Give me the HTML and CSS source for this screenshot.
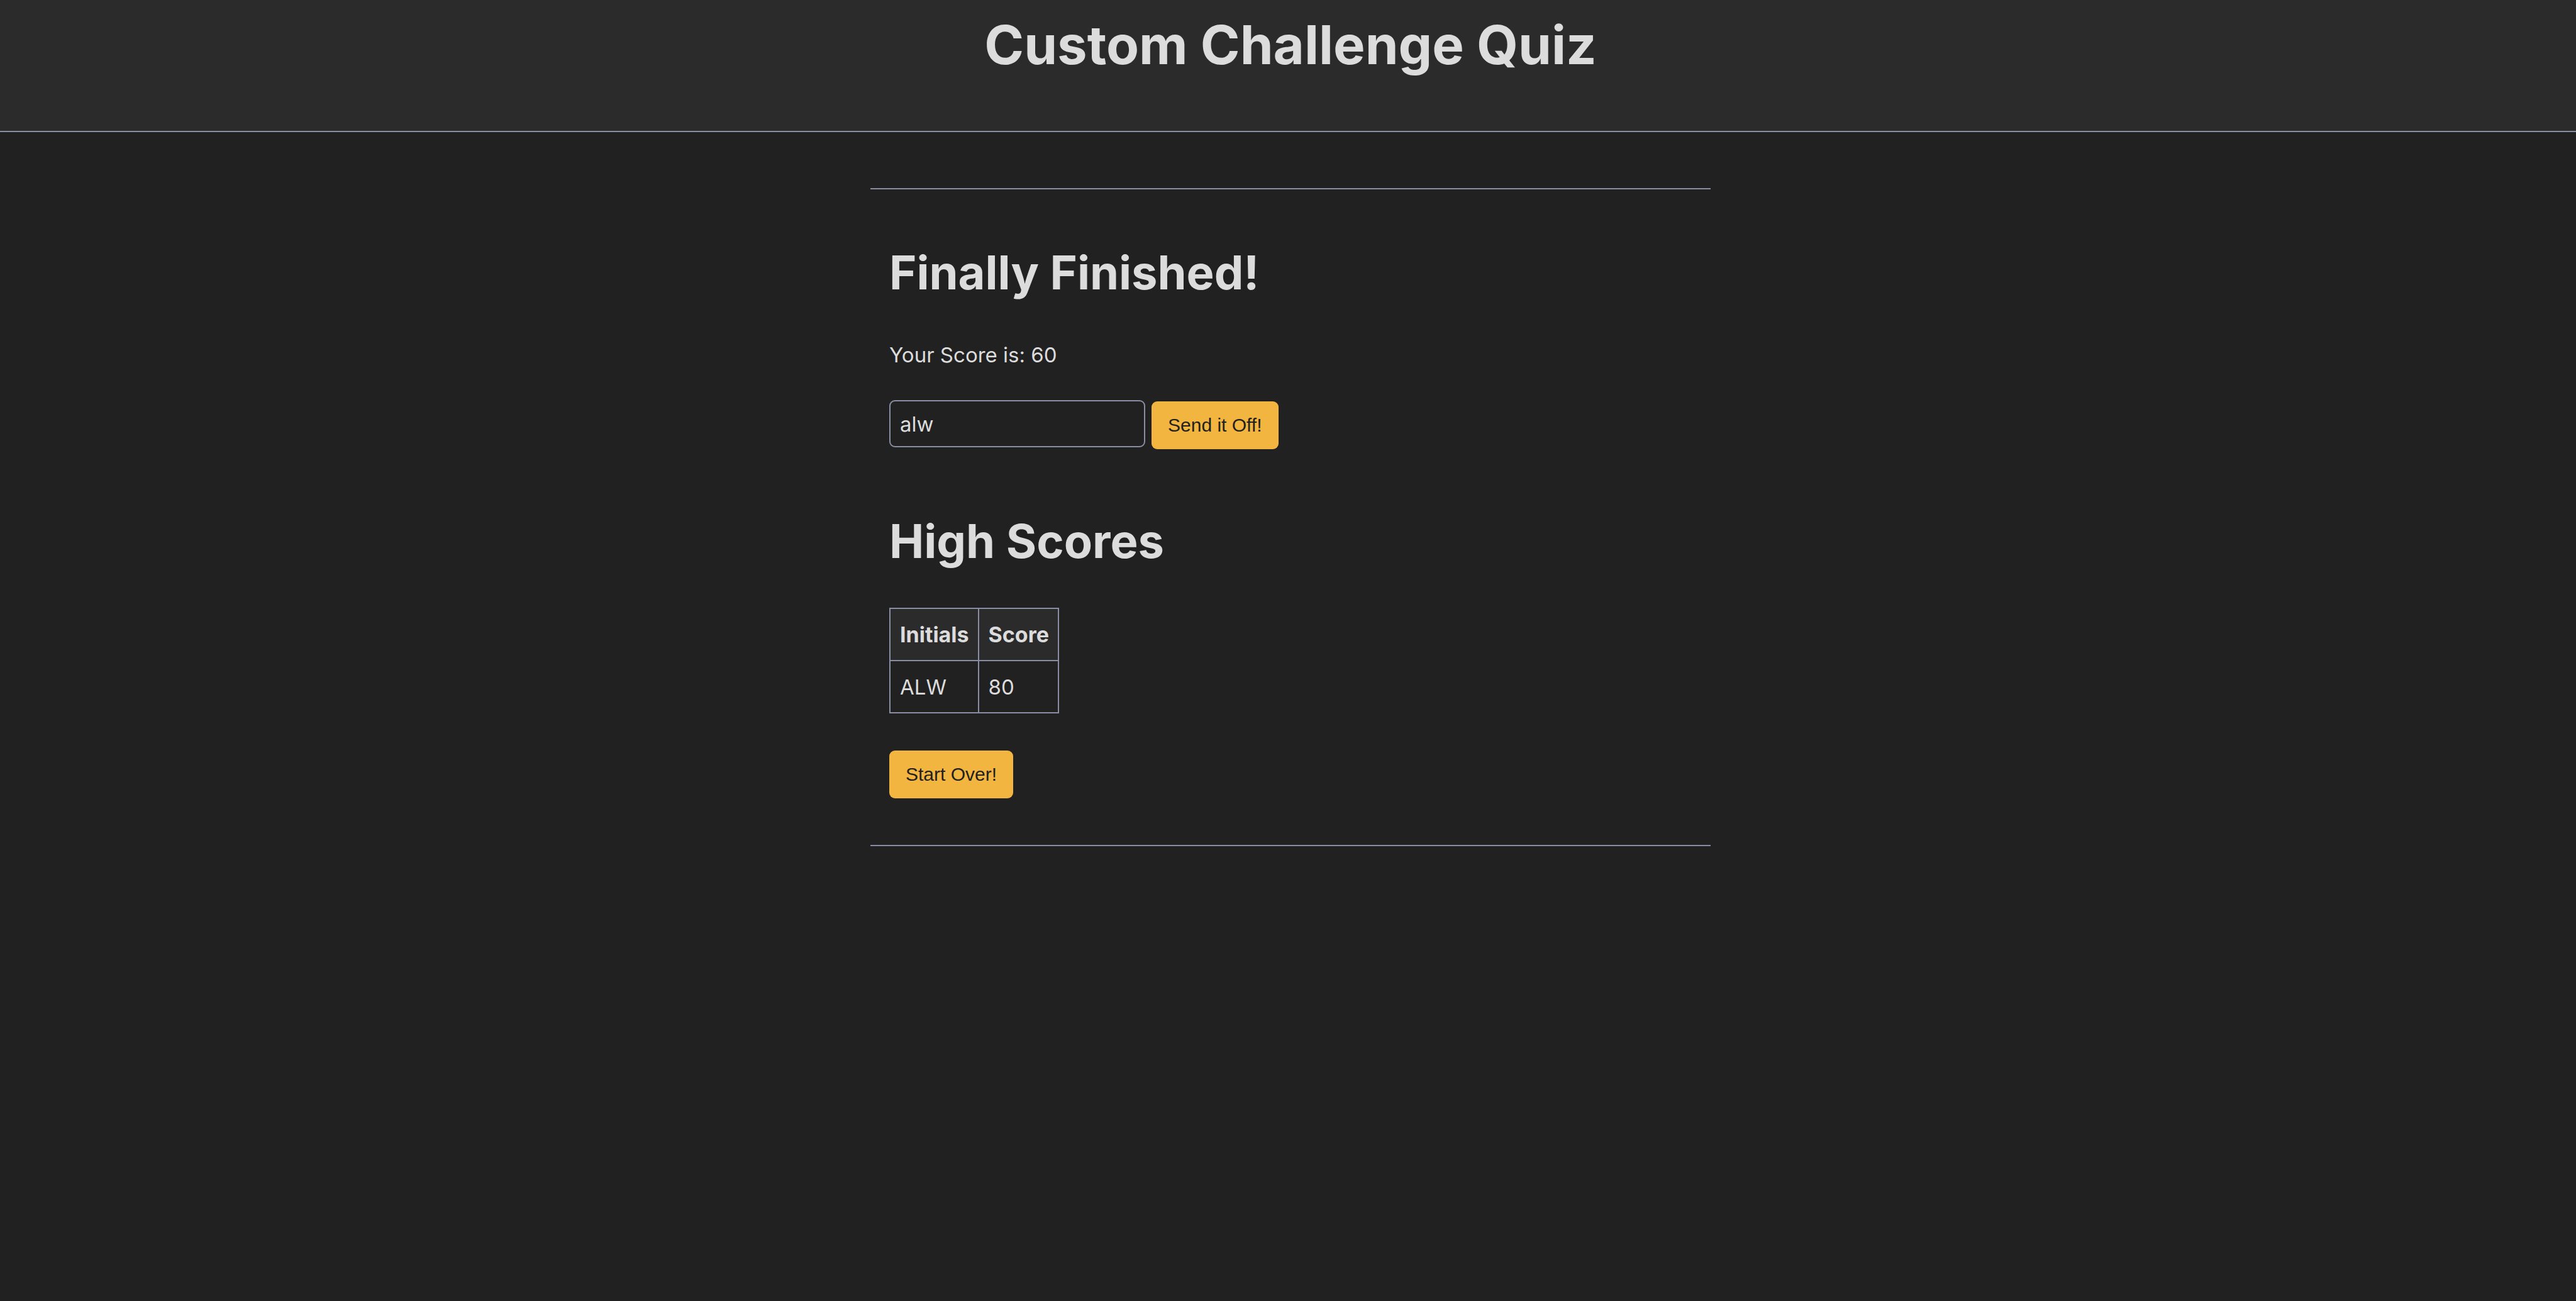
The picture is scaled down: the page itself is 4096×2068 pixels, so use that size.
FILE: index.html
```html
<!DOCTYPE html>
<html lang="en">
<head>
<meta charset="utf-8">
<title>Custom Challenge Quiz</title>
<link rel="stylesheet" href="styles.css">
</head>
<body>
<header class="site-header">
  <h1 class="site-title">Custom Challenge Quiz</h1>
</header>
<main class="content">
  <section class="panel">
    <h2 class="heading">Finally Finished!</h2>
    <p class="score">Your Score is: 60</p>
    <form class="entry">
      <input class="initials" type="text" name="initials" aria-label="Initials" value="alw">
      <button class="button" type="button">Send it Off!</button>
    </form>
    <h2 class="heading heading-scores">High Scores</h2>
    <table class="scores">
      <thead><tr><th scope="col">Initials</th><th scope="col">Score</th></tr></thead>
      <tbody><tr><td>ALW</td><td>80</td></tr></tbody>
    </table>
    <button class="button" type="button">Start Over!</button>
  </section>
</main>
</body>
</html>
```
FILE: styles.css
```css
:root {
  --bg: #212121;
  --raised: #2b2b2b;
  --text: #dcdcdc;
  --line: #898ea4;
  --accent: #f2b540;
  --offset: 8px;
}

* { box-sizing: border-box; }

body {
  margin: 0;
  background: var(--bg);
  color: var(--text);
  font-family: Inter, "Liberation Sans", sans-serif;
  font-size: 33px;
  line-height: 50px;
}

.site-header {
  padding: 24px 0 88px var(--offset);
  border-bottom: 2px solid var(--line);
  background: var(--raised);
  text-align: center;
}

.site-title {
  margin: 0;
  font-size: 85px;
  line-height: 96px;
}

.content {
  padding: 89px 0 89px var(--offset);
}

.panel {
  max-width: 1336px;
  margin: 0 auto;
  padding: 82px 30px 74px;
  border-top: 2px solid var(--line);
  border-bottom: 2px solid var(--line);
}

.heading {
  margin: 0 0 56px;
  font-size: 74px;
  line-height: 100px;
}

.score { margin: 0 0 47px; }

.entry {
  display: flex;
  align-items: flex-start;
  gap: 10px;
}

.initials {
  width: 407px;
  height: 75px;
  padding: 0 15px;
  border: 2px solid var(--line);
  border-radius: 9px;
  background: var(--bg);
  color: var(--text);
  font: inherit;
}

.button {
  height: 76px;
  padding: 0 26px;
  border: 0;
  border-radius: 9px;
  background: var(--accent);
  color: var(--bg);
  font: 30px/34px "Liberation Sans", Arial, sans-serif;
}

.entry .button { margin-top: 2px; }

.heading-scores { margin-top: 96px; }

.scores {
  margin-bottom: 59px;
  border-collapse: collapse;
}

.scores th,
.scores td {
  height: 83px;
  padding: 0 14px 0 15px;
  border: 2px solid var(--line);
  text-align: left;
}

.scores th {
  background: var(--raised);
  font-size: 34px;
}
```
